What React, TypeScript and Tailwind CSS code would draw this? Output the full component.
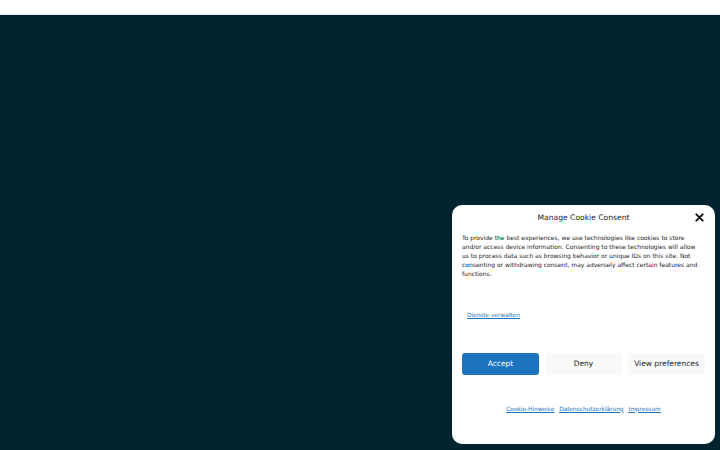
export default function App() {
  return (
    <div className="w-[720px] h-[450px] flex flex-col bg-[#012430] overflow-hidden" style={{ fontFamily: '"DejaVu Sans", sans-serif' }}>
      <div className="h-[15px] bg-white shrink-0 border-b border-[#e5e5e5]" />
      <div className="flex-1 flex justify-end items-start pt-[190px] pr-[5px]">
        <div className="w-[263px] h-[239px] bg-white rounded-[10px] flex flex-col px-[10px] pt-[3px] leading-[9px]">
          <div className="relative flex justify-center items-center h-[20px]">
            <span className="text-[7.6px] leading-[10px] text-[#222]">Manage Cookie Consent</span>
            <svg className="absolute right-[1px] top-[5px]" width="9" height="9" viewBox="0 0 10 10">
              <path d="M1.5 1.5 L8.5 8.5 M8.5 1.5 L1.5 8.5" stroke="#111" strokeWidth="2.2" strokeLinecap="round" />
            </svg>
          </div>
          <p className="mt-[5px] mr-[7px] text-[6px] leading-[9px] text-[#1a1a1a]">
            To provide the best experiences, we use technologies like cookies to store and/or access device information. Consenting to these technologies will allow us to process data such as browsing behavior or unique IDs on this site. Not consenting or withdrawing consent, may adversely affect certain features and functions.
          </p>
          <div className="mt-[32.5px] pl-[5px] h-[9px] leading-[9px] flex items-center">
            <a className="text-[5.8px] leading-[9px] text-[#1e73be] underline">Dienste verwalten</a>
          </div>
          <div className="mt-[33.5px] flex gap-[6px]">
            <button className="w-[77px] h-[22px] rounded-[3px] bg-[#1e73be] text-white text-[7.5px] leading-[10px]">Accept</button>
            <button className="w-[77px] h-[22px] rounded-[3px] bg-[#f9f9f9] text-[#222] text-[7.5px] leading-[10px]">Deny</button>
            <button className="w-[77px] h-[22px] rounded-[3px] bg-[#f9f9f9] text-[#222] text-[7.5px] leading-[10px]">View preferences</button>
          </div>
          <div className="mt-[29.5px] h-[9px] flex justify-center items-center gap-[5px] text-[5.8px] leading-[9px] text-[#1e73be] underline">
            <a>Cookie-Hinweise</a>
            <a>Datenschutzerklärung</a>
            <a>Impressum</a>
          </div>
        </div>
      </div>
    </div>
  );
}
